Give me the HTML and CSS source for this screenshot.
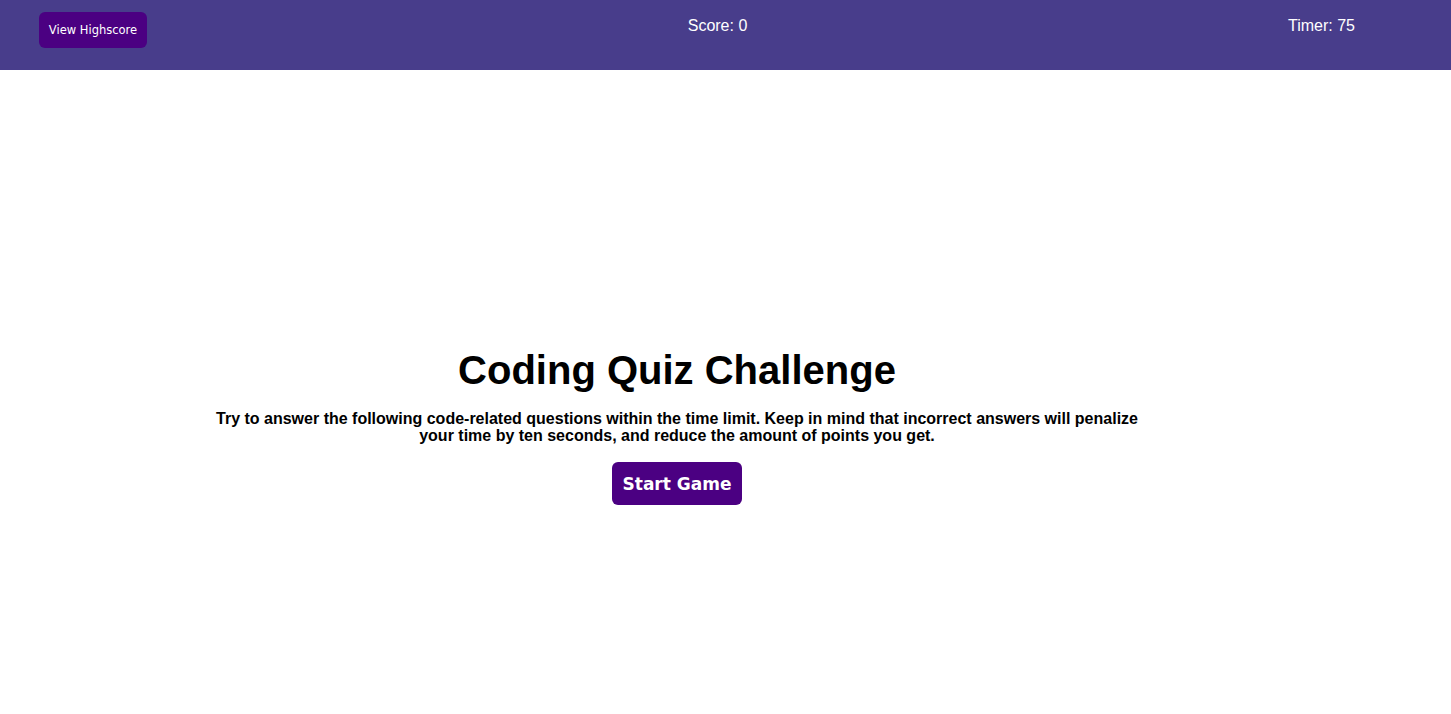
FILE: index.html
```html
<!DOCTYPE html>
<html>
<head>
<meta charset="utf-8">
<link rel="stylesheet" href="styles.css">
</head>
<body>
<header class="topbar">
  <button class="hs-btn">View Highscore</button>
  <div class="stat">Score: 0</div>
  <div class="stat">Timer: 75</div>
</header>
<main class="intro">
  <h1 class="title">Coding Quiz Challenge</h1>
  <p class="desc">Try to answer the following code-related questions within the time limit. Keep in mind that incorrect answers will penalize your time by ten seconds, and reduce the amount of points you get.</p>
  <button class="start-btn">Start Game</button>
</main>
</body>
</html>
```

FILE: styles.css
```css
html, body {
  margin: 0;
  padding: 0;
  background: #ffffff;
  font-family: "Liberation Sans", Arial, sans-serif;
}

.topbar {
  height: 70px;
  box-sizing: border-box;
  background: #483d8b;
  display: flex;
  justify-content: space-between;
  align-items: flex-start;
  padding: 12px 96px 0 39px;
}

.hs-btn {
  height: 36px;
  width: 108px;
  padding: 0;
  border: none;
  border-radius: 6px;
  background: #4b0082;
  color: #ffffff;
  font-family: "DejaVu Sans", Verdana, sans-serif;
  font-size: 11.5px;
  cursor: pointer;
}

.stat {
  color: #ffffff;
  font-size: 16px;
  line-height: 18px;
  margin-top: 5px;
}

.intro {
  display: flex;
  flex-direction: column;
  align-items: center;
  text-align: center;
  padding: 277px 97px 0 0;
}

.title {
  margin: 0;
  font-size: 40px;
  font-weight: bold;
  line-height: 46px;
  color: #000;
}

.desc {
  margin: 17px 0 0 0;
  max-width: 940px;
  font-size: 16px;
  font-weight: bold;
  line-height: 17px;
  color: #000;
}

.start-btn {
  margin-top: 18px;
  height: 43px;
  width: 130px;
  padding: 0;
  border: none;
  border-radius: 6px;
  background: #4b0082;
  color: #ffffff;
  font-family: "DejaVu Sans", Verdana, sans-serif;
  font-weight: bold;
  font-size: 17px;
  cursor: pointer;
}
```
